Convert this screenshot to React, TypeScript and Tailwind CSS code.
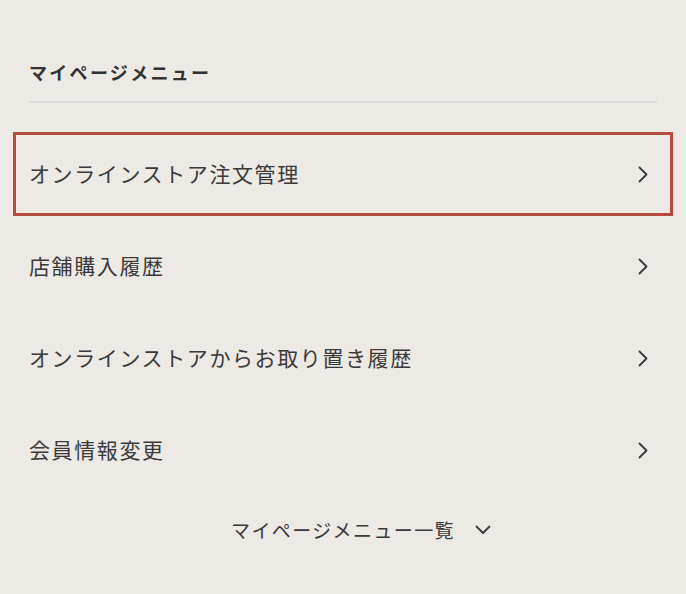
const items = [
  'オンラインストア注文管理',
  '店舗購入履歴',
  'オンラインストアからお取り置き履歴',
  '会員情報変更',
]

function Chevron({ down = false }: { down?: boolean }) {
  return down ? (
    <svg width="16" height="10" viewBox="0 0 16 10" fill="none" stroke="currentColor" strokeWidth="1.8" strokeLinecap="round" strokeLinejoin="round">
      <polyline points="1.5,1.5 8,8 14.5,1.5" />
    </svg>
  ) : (
    <svg width="10" height="17" viewBox="0 0 10 17" fill="none" stroke="currentColor" strokeWidth="1.8" strokeLinecap="round" strokeLinejoin="round">
      <polyline points="1.5,1.5 8.5,8.5 1.5,15.5" />
    </svg>
  )
}

export default function App() {
  return (
    <div
      className="min-h-screen bg-[#ede9e5] text-[#3a3a3a] pl-[13px] pr-[13px] pt-[59px]"
      style={{ fontFamily: '"Noto Sans CJK JP", "Noto Sans", sans-serif' }}
    >
      {/* Heading */}
      <div className="mx-[16px]">
        <h2 className="text-[18px] leading-[26px] font-bold tracking-[2.3px] text-[#333]">
          マイページメニュー
        </h2>
        <div className="mt-[16px] h-[2px] bg-[#dddad7]" />
      </div>

      {/* Menu list */}
      <ul className="mt-[29px] flex flex-col gap-[8px]">
        {items.map((label, i) => (
          <li key={label}>
            <a
              href="#"
              className={
                'flex h-[84px] items-center justify-between border-[3px] pl-[13px] pr-[22px] ' +
                (i === 0 ? 'border-[#b54a3e]' : 'border-transparent')
              }
            >
              <span className="text-[21px] tracking-[1.6px]">{label}</span>
              <span className="text-[#3a3a3a]">
                <Chevron />
              </span>
            </a>
          </li>
        ))}
      </ul>

      {/* Show all */}
      <div className="mt-[24px] flex justify-center">
        <button className="relative text-[19px] leading-[28px] tracking-[1.4px]">
          <span>マイページメニュー一覧</span>
          <span className="absolute left-[calc(100%+20px)] top-[9px] text-[#3a3a3a]">
            <Chevron down />
          </span>
        </button>
      </div>
    </div>
  )
}
